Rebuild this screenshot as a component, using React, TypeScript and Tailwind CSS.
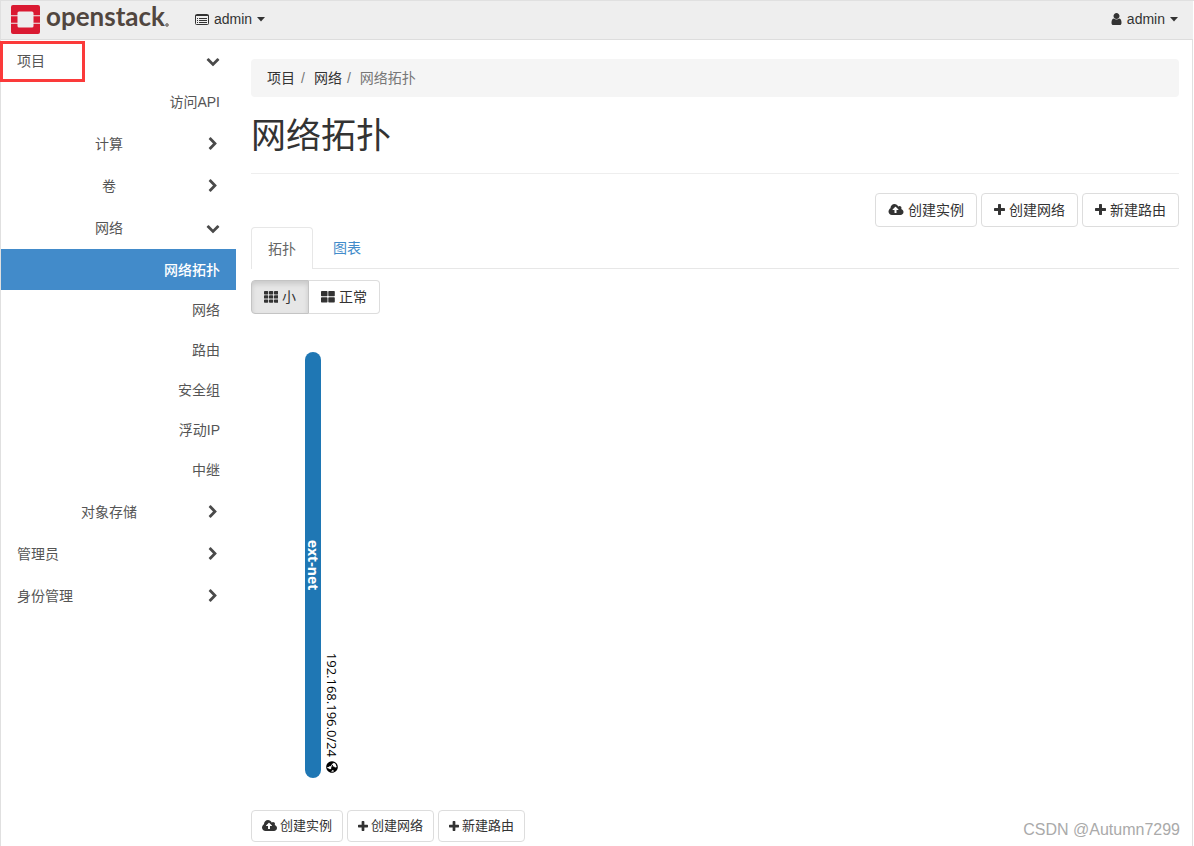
import { FaGlobeAmericas } from 'react-icons/fa';

const iconPaths = {
  plus: 'M1600 736v192q0 40-28 68t-68 28h-416v416q0 40-28 68t-68 28h-192q-40 0-68-28t-28-68v-416h-416q-40 0-68-28t-28-68v-192q0-40 28-68t68-28h416v-416q0-40 28-68t68-28h192q40 0 68 28t28 68v416h416q40 0 68 28t28 68z',
  right: 'M1363 877l-742 742q-19 19-45 19t-45-19l-166-166q-19-19-19-45t19-45l531-531-531-531q-19-19-19-45t19-45l166-166q19-19 45-19t45 19l742 742q19 19 19 45t-19 45z',
  down: 'M1683 808l-742 741q-19 19-45 19t-45-19l-742-741q-19-19-19-45.5t19-45.5l166-165q19-19 45-19t45 19l531 531 531-531q19-19 45-19t45 19l166 165q19 19 19 45.5t-19 45.5z',
  cloud: 'M1216 864q0-14-9-23l-352-352q-9-9-23-9t-23 9l-351 351q-10 12-10 24 0 14 9 23t23 9h224v352q0 13 9.5 22.5t22.5 9.5h192q13 0 22.5-9.5t9.5-22.5v-352h224q13 0 22.5-9.5t9.5-22.5zm640 288q0 159-112.5 271.5t-271.5 112.5h-1088q-185 0-316.5-131.5t-131.5-316.5q0-130 70-240t188-165q-2-30-2-43 0-212 150-362t362-150q156 0 285.5 87t188.5 231q71-62 166-62 106 0 181 75t75 181q0 76-41 138 130 31 213.5 135.5t83.5 238.5z',
  user: 'M1536 1399q0 109-62.5 187t-150.5 78h-854q-88 0-150.5-78t-62.5-187q0-85 8.5-160.5t31.5-152 58.5-131 94-89 134.5-34.5q131 128 313 128t313-128q76 0 134.5 34.5t94 89 58.5 131 31.5 152 8.5 160.5zm-256-887q0 159-112.5 271.5t-271.5 112.5-271.5-112.5-112.5-271.5 112.5-271.5 271.5-112.5 271.5 112.5 112.5 271.5z',
};

const viewBoxes = {
  plus: '192 128 1408 1536',
  right: '0 0 1792 1792',
  down: '0 0 1792 1792',
  cloud: '-64 128 1920 1536',
  user: '256 128 1280 1536',
};

type IconName = keyof typeof iconPaths;

const Icon = ({ name, className }: { name: IconName; className: string }) => (
  <svg viewBox={viewBoxes[name]} className={`shrink-0 ${className}`} fill="currentColor" aria-hidden="true">
    <path d={iconPaths[name]} />
  </svg>
);

const Caret = () => (
  <svg viewBox="0 0 8 5" className="w-2 h-[5px]" fill="currentColor" aria-hidden="true">
    <path d="M0 0h8L4 4.600z" />
  </svg>
);

const ListIcon = () => (
  <svg viewBox="0 0 14 11" className="w-3.5 h-[11px]" aria-hidden="true">
    <rect x="0.5" y="0.5" width="13" height="10" rx="1" fill="none" stroke="currentColor" />
    <path d="M0.5 1.5h13M2 4.5h1M2 6.5h1M2 8.5h1M4 4.5h8M4 6.5h8M4 8.5h8" stroke="currentColor" />
  </svg>
);

const GridIcon = ({ cells }: { cells: number[][] }) => (
  <svg viewBox="0 0 14 12" className="w-3.5 h-3" fill="currentColor" aria-hidden="true">
    {cells.map(([x, y, w, h]) => (
      <rect key={`${x}-${y}`} x={x} y={y} width={w} height={h} rx="0.7" />
    ))}
  </svg>
);

const smallCells = [0, 5, 10].flatMap((x) => [0, 4.2, 8.4].map((y) => [x, y, 4.2, 3.4]));
const normalCells = [0, 7.3].flatMap((x) => [0, 6.2].map((y) => [x, y, 6.5, 5.3]));

const Logo = () => (
  <a href="#home" className="flex items-center text-[#51463f]" aria-label="openstack">
    <svg viewBox="0 0 29 29" className="w-[29px] h-[29px]" aria-hidden="true">
      <path
        fill="#da1a32"
        d="M2 0h25a2 2 0 0 1 2 2v8.300h-6.500V8a1.500 1.500 0 0 0-1.500-1.500H8A1.500 1.500 0 0 0 6.500 8v2.300H0V2a2 2 0 0 1 2-2zM0 11.300h6.500v6.400H0zM22.500 11.300H29v6.400h-6.500zM0 18.700h6.500V21A1.500 1.500 0 0 0 8 22.500h13a1.500 1.500 0 0 0 1.500-1.500v-2.300H29V27a2 2 0 0 1-2 2H2a2 2 0 0 1-2-2z"
      />
    </svg>
    <span className="ml-1.5 pb-1.5 font-['Lato',sans-serif] text-[26px] leading-7 font-bold">openstack</span>
    <svg viewBox="0 0 4 4" className="mt-3 w-1 h-1" aria-hidden="true">
      <circle cx="2" cy="2" r="1.400" fill="#a39d98" stroke="currentColor" strokeWidth="0.600" />
    </svg>
  </a>
);

type NavToggle = { label: string; open?: boolean };

const Toggle = ({ label, open, center }: NavToggle & { center?: boolean }) => (
  <button type="button" aria-expanded={!!open} className="flex w-full h-[42px] items-center px-4">
    <span className={`flex-1 ${center ? 'text-center' : 'text-left'}`}>{label}</span>
    <Icon name={open ? 'down' : 'right'} className="ml-[5px] w-3.5 h-3.5 text-[#4a4a4a]" />
  </button>
);

const Leaf = ({ label, active }: { label: string; active?: boolean }) => (
  <a
    href="#panel"
    className={`flex items-center justify-end px-4 ${active ? 'h-[41px] bg-[#428bca] text-white font-medium' : 'h-10'}`}
  >
    {label}
  </a>
);

const networkPanels = ['网络拓扑', '网络', '路由', '安全组', '浮动IP', '中继'];

const Sidebar = () => (
  <nav className="relative w-[235px] shrink-0 pt-px text-[#555]">
    <div className="absolute top-0.5 -left-px w-[85px] h-[41px] border-3 border-[#fb3a3a] pointer-events-none"></div>
    <Toggle label="项目" open />
    <div className="pb-px">
      <Leaf label="访问API" />
    </div>
    <Toggle label="计算" center />
    <Toggle label="卷" center />
    <Toggle label="网络" open center />
    <div className="pb-px">
      {networkPanels.map((label, i) => (
        <Leaf key={label} label={label} active={i === 0} />
      ))}
    </div>
    <Toggle label="对象存储" center />
    <Toggle label="管理员" />
    <Toggle label="身份管理" />
  </nav>
);

const actions: { icon: IconName; label: string }[] = [
  { icon: 'cloud', label: '创建实例' },
  { icon: 'plus', label: '创建网络' },
  { icon: 'plus', label: '新建路由' },
];

const Actions = ({ small }: { small?: boolean }) => (
  <div className={`flex gap-1 ${small ? 'text-[13px]' : 'justify-end'}`}>
    {actions.map(({ icon, label }) => (
      <button
        key={label}
        type="button"
        className={`flex items-center rounded border border-[#ddd] bg-white ${small ? 'h-8 gap-[3px] px-2.5' : 'h-[34px] gap-1 px-3'}`}
      >
        <Icon name={icon} className={icon === 'cloud' ? (small ? 'w-[15px] h-3' : 'w-4 h-3') : small ? 'w-2.5 h-[11px]' : 'w-[11px] h-3'} />
        {label}
      </button>
    ))}
  </div>
);

const Topology = () => (
  <svg className="block w-full h-[496px]" role="img" aria-label="网络拓扑">
    <rect x="54" y="38" width="16" height="426" rx="8" fill="#1f77b4" />
    <g transform="translate(57 251) rotate(90)">
      <text textAnchor="middle" className="font-['Open_Sans',sans-serif] text-[14px] font-bold" fill="#fff">
        ext-net
      </text>
    </g>
    <g transform="translate(76 443) rotate(90)">
      <text textAnchor="end" className="font-['Open_Sans',sans-serif] text-[13px]" fill="#000">
        192.168.196.0/24
      </text>
      <FaGlobeAmericas x="4" y="-11" size={12} color="#000" />
    </g>
  </svg>
);

const App = () => (
  <div className="relative flex min-h-screen flex-col border-l border-t border-[#e0e0e0] bg-white pr-px font-['Liberation_Sans','Noto_Sans_CJK_SC',sans-serif] text-[14px] leading-5 text-[#333]">
    <header className="flex h-[39px] items-center justify-between border-b border-[#ddd] bg-[#eee] pb-0.5 pl-2.5 pr-[15px]">
      <div className="flex items-center">
        <Logo />
        <button type="button" className="ml-[26px] flex items-center gap-[5px]">
          <ListIcon />
          admin
          <Caret />
        </button>
      </div>
      <button type="button" className="flex items-center gap-[5px]">
        <Icon name="user" className="w-[11px] h-3" />
        admin
        <Caret />
      </button>
    </header>

    <div className="flex flex-1 border-r border-[#e0e0e0]">
      <div className="-mt-px flex">
        <Sidebar />
      </div>

      <main className="min-w-0 flex-1 pl-[15px] pr-[13px] pt-[19px]">
        <ol className="flex h-[38px] items-center rounded bg-[#f5f5f5] px-4">
          <li><a href="#project">项目</a></li>
          <li className="ml-1.5 mr-[9px] text-[#777]" aria-hidden="true">/</li>
          <li><a href="#network">网络</a></li>
          <li className="ml-[5px] mr-[9px] text-[#777]" aria-hidden="true">/</li>
          <li className="text-[#777]">网络拓扑</li>
        </ol>

        <h1 className="border-b border-[#eee] pt-[17px] pb-4 text-[35px] leading-[43px] font-normal">网络拓扑</h1>

        <div className="pt-[19px]">
          <Actions />
        </div>

        <div role="tablist" className="flex border-b border-[#e7e7e7]">
          <button type="button" role="tab" aria-selected="true" className="-mb-px h-[42px] rounded-t border border-b-0 border-[#e7e7e7] bg-white px-4 text-[#666]">
            拓扑
          </button>
          <button type="button" role="tab" aria-selected="false" className="h-[41px] px-5 text-[#428bca]">
            图表
          </button>
        </div>

        <div className="mt-[11px] flex">
          <button type="button" aria-pressed="true" className="flex h-[34px] items-center gap-1 rounded-l border border-[#c4c4c4] bg-[#e6e6e6] px-3 shadow-[inset_0_3px_5px_rgba(0,0,0,0.125)]">
            <GridIcon cells={smallCells} />
            小
          </button>
          <button type="button" aria-pressed="false" className="flex h-[34px] items-center gap-1 rounded-r border border-l-0 border-[#ddd] px-3">
            <GridIcon cells={normalCells} />
            正常
          </button>
        </div>

        <Topology />
        <Actions small />
      </main>
    </div>

    <span className="absolute bottom-1 right-3.5 font-['Liberation_Sans',sans-serif] text-[16px] leading-6 text-[#aaa]">
      CSDN @Autumn7299
    </span>
  </div>
);

export default App;
